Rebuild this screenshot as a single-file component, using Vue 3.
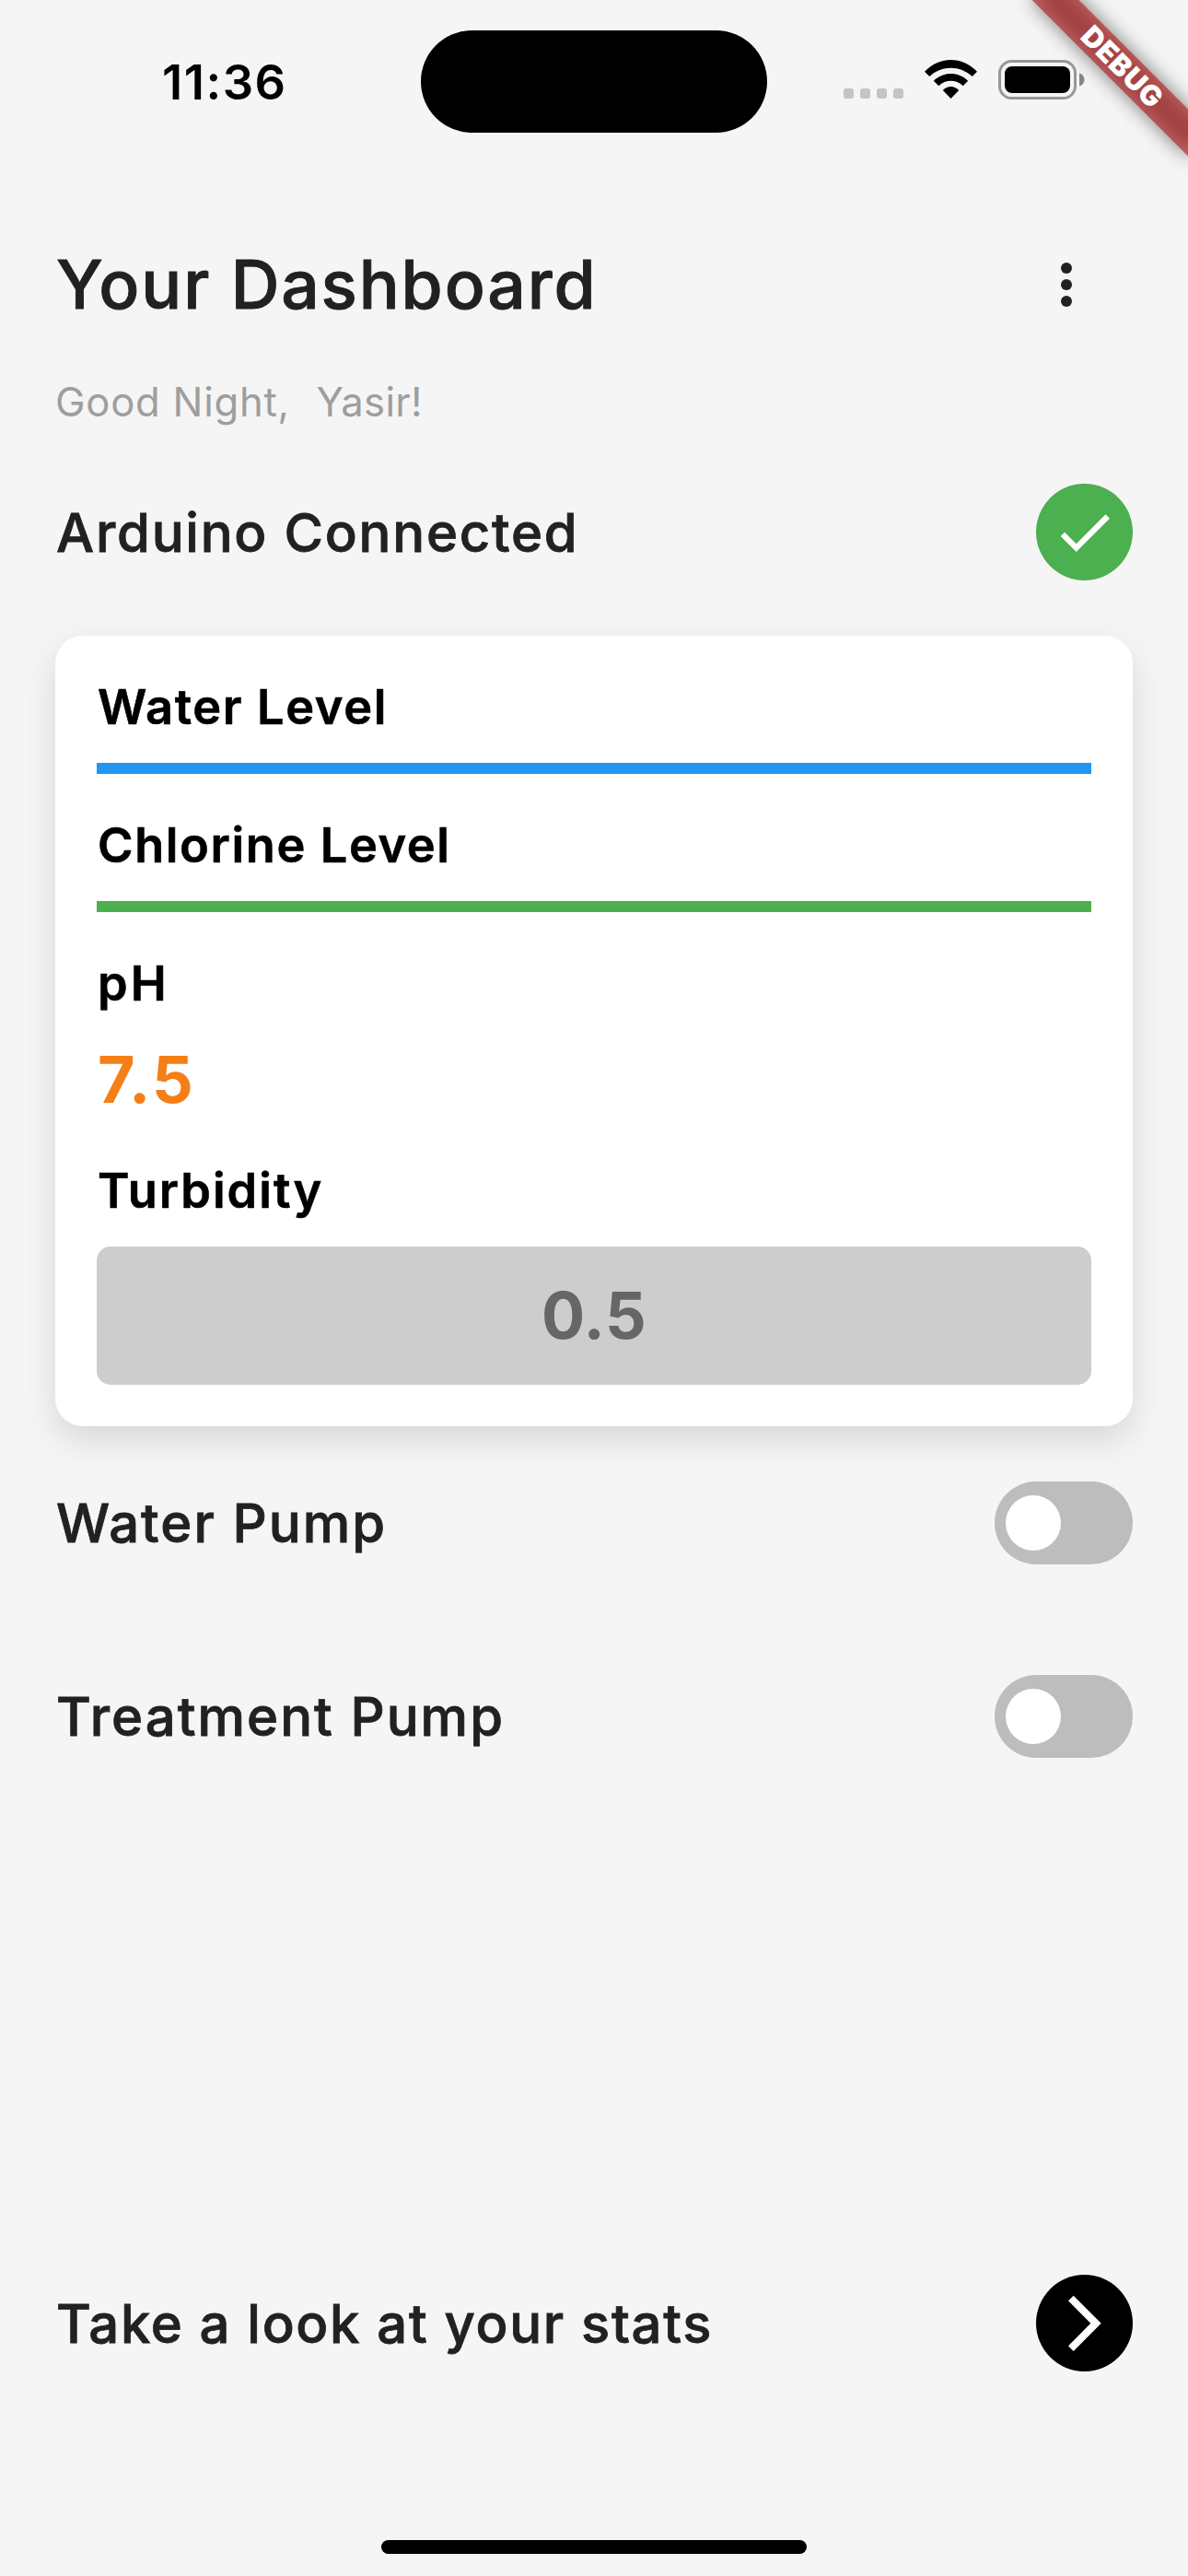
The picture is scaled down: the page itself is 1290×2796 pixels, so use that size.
<script setup>
const readings = [
  { label: 'Water Level', kind: 'bar', tone: 'blue' },
  { label: 'Chlorine Level', kind: 'bar', tone: 'green' },
  { label: 'pH', kind: 'value', value: '7.5', tone: 'ph' },
  { label: 'Turbidity', kind: 'box', value: '0.5', tone: 'turbidity' },
]
const pumps = ['Water Pump', 'Treatment Pump']
</script>

<template>
  <div class="screen">
    <header class="status">
      <span class="time">11:36</span>
      <div class="island"></div>
      <div class="indicators">
        <div class="signal"><i v-for="n in 4" :key="n"></i></div>
        <svg class="wifi" width="57" height="42" viewBox="0 0 57 42">
          <path d="M0 12.7C16-4.2 41-4.2 57 12.7L51.7 18C38.500 5.600 18.500 5.600 5.300 18Z" />
          <path d="M9.800 22.700C20.500 12.400 36.500 12.400 47.200 22.700L41.700 28.300C34 21 23 21 15.300 28.300Z" />
          <path d="M19.800 33C25 27.700 32 27.700 37.200 33L28.500 42Z" />
        </svg>
        <svg class="battery" width="94" height="43" viewBox="0 0 94 43">
          <rect x="1.500" y="1.500" width="82" height="40" rx="13" fill="none" stroke="#979797" stroke-width="3" />
          <rect x="7" y="7" width="71" height="29" rx="8" />
          <path d="M88 14.500C91.500 15.500 93.500 18.300 93.500 21.500S91.500 27.500 88 28.500Z" fill="#868686" />
        </svg>
      </div>
    </header>

    <main>
      <div class="row title-row">
        <h1>Your Dashboard</h1>
        <svg class="more" width="48" height="96" viewBox="0 0 48 96">
          <circle cx="24" cy="30" r="6" /><circle cx="24" cy="48" r="6" /><circle cx="24" cy="66" r="6" />
        </svg>
      </div>
      <p class="greeting"><span class="phrase">Good Night,</span><span class="name">Yasir!</span></p>
      <div class="row connected">
        <h2>Arduino Connected</h2>
        <svg width="105" height="105" viewBox="0 0 105 105">
          <circle cx="52.500" cy="52.500" r="52.500" fill="#4caf50" />
          <path d="M26.700 57L31 52.700L43.700 65.200L75.500 33.300L80 37.800L43.700 74Z" fill="#fff" />
        </svg>
      </div>

      <section class="card">
        <div v-for="r in readings" :key="r.label" class="reading" :class="'reading-' + r.tone">
          <h3>{{ r.label }}</h3>
          <div v-if="r.kind === 'bar'" :class="['bar', r.tone]"></div>
          <div v-else :class="r.kind">{{ r.value }}</div>
        </div>
      </section>

      <div v-for="p in pumps" :key="p" class="row pump">
        <h2>{{ p }}</h2>
        <div class="toggle"><i></i></div>
      </div>

      <div class="row stats">
        <h2>Take a look at your stats</h2>
        <svg width="105" height="105" viewBox="0 0 105 105">
          <circle cx="52.500" cy="52.500" r="52.500" />
          <path d="M35 28.300L40.700 22.700L70.700 52.700L40.700 83L35 77.300L59.300 52.700Z" fill="#fff" />
        </svg>
      </div>
    </main>
    <div class="home"></div>
    <div class="debug"><div class="ribbon"><span>DEBUG</span></div></div>
  </div>
</template>

<style>
body { background: #f5f5f5; }
</style>

<style scoped>
.screen { position: relative; display: flex; flex-direction: column; width: 1290px; height: 2796px; overflow: hidden; background: #f5f5f5; color: #212121; font-family: Inter, sans-serif; }
h1, h2, h3, p { margin: 0; white-space: nowrap; }
.status { display: grid; grid-template-columns: 457px 376px 457px; height: 177px; align-items: start; color: #000; }
.time { margin: 57px 0 0 176px; font-size: 52.5px; line-height: 64px; font-weight: 600; letter-spacing: 1.5px; }
.island { height: 111px; margin-top: 33px; border-radius: 56px; background: #000; }
.indicators { display: flex; padding: 65px 0 0 83px; }
.signal { display: flex; gap: 7px; margin-top: 31px; }
.signal i { width: 11px; height: 11px; border-radius: 3px; background: #c4c4c4; }
.wifi { margin-left: 23px; }
.battery { margin-left: 23px; }
main { flex: 1; display: flex; flex-direction: column; padding: 84px 60px 0; }
.row { display: flex; align-items: center; justify-content: space-between; }
.title-row { height: 96px; }
h1 { padding-left: 1px; font-size: 73px; line-height: 96px; font-weight: 500; letter-spacing: 1.9px; -webkit-text-stroke: 0.9px currentColor; }
.more { margin-right: 48px; fill: #212121; }
.greeting { display: flex; margin-top: 54px; font-size: 43.6px; line-height: 52px; color: #9e9e9e; }
.phrase { width: 283.5px; letter-spacing: 0.76px; }
.name { letter-spacing: 0.31px; }
.connected { margin-top: 62px; height: 105px; }
h2 { padding-left: 1px; font-size: 58px; line-height: 72px; font-weight: 500; letter-spacing: 1.78px; -webkit-text-stroke: 0.8px currentColor; }
.pump h2 { letter-spacing: 2.05px; }
.stats h2 { letter-spacing: 1.68px; }
.card { display: flex; flex-direction: column; gap: 45px; margin-top: 60px; padding: 45px; border-radius: 30px; background: #fff; box-shadow: 0 15px 36px rgba(0, 0, 0, 0.12); }
.reading { display: flex; flex-direction: column; gap: 29px; }
h3 { padding-left: 1px; font-size: 52.3px; line-height: 64px; font-weight: 600; letter-spacing: 1.62px; color: #000; -webkit-text-stroke: 0.6px currentColor; }
.reading-ph h3 { letter-spacing: 3px; }
.reading-turbidity h3 { letter-spacing: 2px; }
.bar { height: 12px; }
.blue { background: #2196f3; }
.green { background: #4caf50; }
.value { padding-left: 1px; font-size: 70px; line-height: 87px; font-weight: 700; letter-spacing: 2px; color: #f57f17; }
.box { height: 150px; border-radius: 15px; background: #cdcdcd; color: #666; font-size: 70px; line-height: 150px; font-weight: 700; letter-spacing: 0.46px; text-align: center; }
.pump { height: 90px; margin-top: 60px; }
.pump + .pump { margin-top: 120px; }
.toggle { display: flex; align-items: center; width: 150px; height: 90px; padding-left: 12px; box-sizing: border-box; border-radius: 45px; background: #bdbdbd; }
.toggle i { width: 60px; height: 60px; border-radius: 50%; background: #fff; }
.stats { height: 105px; margin-top: auto; }
.home { width: 462px; height: 15px; margin: 183px auto 24px; border-radius: 7.5px; background: #000; }
.debug { position: absolute; top: 54px; left: 1098px; }
.ribbon { position: relative; width: 240px; height: 36px; transform: rotate(45deg); text-align: center; }
.ribbon::before { content: ''; position: absolute; inset: 0; background: rgba(0, 0, 0, 0.5); filter: blur(10.9px); }
.ribbon span { position: relative; display: block; background: rgba(183, 28, 28, 0.627); color: #fff; font-size: 31px; line-height: 36px; font-weight: 900; letter-spacing: 0.6px; text-indent: 2px; }
</style>
